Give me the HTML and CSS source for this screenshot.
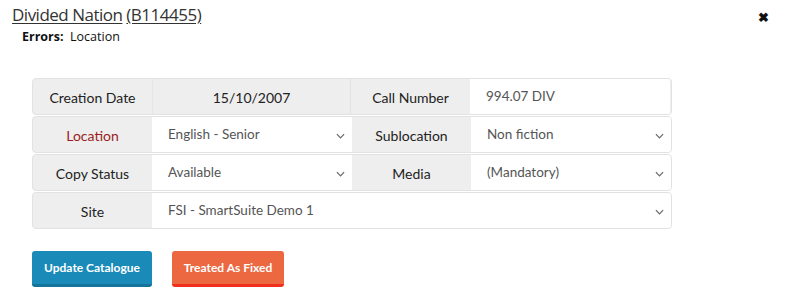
FILE: index.html
```html
<!DOCTYPE html>
<html>
<head>
<meta charset="utf-8">
<link rel="stylesheet" href="styles.css">
</head>
<body>
<div class="dialog">
  <div class="header">
    <div class="title"><a class="link">Divided Nation</a> <a class="link">(B114455)</a></div>
    <span class="close">&#10006;</span>
  </div>
  <div class="errors"><b>Errors:</b>&nbsp; Location</div>

  <div class="form">
    <div class="row">
      <div class="label">Creation Date</div>
      <div class="value static">15/10/2007</div>
      <div class="label">Call Number</div>
      <div class="value field">994.07 DIV</div>
    </div>
    <div class="row">
      <div class="label error">Location</div>
      <div class="value field select">English - Senior<svg class="chev" viewBox="0 0 10 6"><path d="M1 1l4 4 4-4"/></svg></div>
      <div class="label">Sublocation</div>
      <div class="value field select">Non fiction<svg class="chev" viewBox="0 0 10 6"><path d="M1 1l4 4 4-4"/></svg></div>
    </div>
    <div class="row">
      <div class="label">Copy Status</div>
      <div class="value field select">Available<svg class="chev" viewBox="0 0 10 6"><path d="M1 1l4 4 4-4"/></svg></div>
      <div class="label">Media</div>
      <div class="value field select">(Mandatory)<svg class="chev" viewBox="0 0 10 6"><path d="M1 1l4 4 4-4"/></svg></div>
    </div>
    <div class="row">
      <div class="label">Site</div>
      <div class="value field select wide">FSI - SmartSuite Demo 1<svg class="chev" viewBox="0 0 10 6"><path d="M1 1l4 4 4-4"/></svg></div>
    </div>
  </div>

  <div class="buttons">
    <button class="btn blue">Update Catalogue</button>
    <button class="btn orange">Treated As Fixed</button>
  </div>
</div>
</body>
</html>
```
FILE: styles.css
```css
* { box-sizing: border-box; }
html, body { margin: 0; padding: 0; background: #fff; }
body { font-family: Lato, "Open Sans", sans-serif; color: #222; }
.dialog { width: 786px; height: 308px; padding: 3px 0 0 12px; position: relative; }
.header { display: flex; justify-content: space-between; align-items: center; padding-right: 17px; }
.title { font-family: "Open Sans", sans-serif; font-size: 17px; color: #333; line-height: 24px; letter-spacing: -0.5px; }
.link { text-decoration: underline; text-underline-offset: 2px; text-decoration-thickness: 1px; }
.close { font-size: 13px; font-weight: bold; color: #111; margin-top: 4px; }
.errors { font-family: "Open Sans", sans-serif; font-size: 12.5px; padding-left: 10px; margin-top: 1px; color: #111; }
.errors b { font-weight: 700; }
.form { margin: 33px 0 0 20px; width: 640px; display: flex; flex-direction: column; gap: 1px; }
.row { display: flex; height: 37px; background: #eee; border: 1px solid #e2e2e2; border-radius: 4px; overflow: hidden; }
.label { width: 119px; flex: none; display: flex; align-items: center; justify-content: center; font-size: 14px; color: #222; padding-top: 2px; }
.label.error { color: #9b1c1c; }
.value { width: 200px; flex: none; display: flex; align-items: center; font-size: 14px; position: relative; }
.value.static { justify-content: center; color: #222; padding-top: 2px; width: 199px; border-left: 1px solid #e6e6e6; border-right: 1px solid #e2e2e2; }
.value.field { background: #fff; color: #555; padding: 0 16px 2px 16px; align-items: flex-start; padding-top: 9px; font-size: 13.5px; }
.value.wide { flex: 1; }
.chev { position: absolute; right: 7px; top: 16px; width: 9px; height: 6px; fill: none; stroke: #666; stroke-width: 1.3; }
.buttons { display: flex; gap: 20px; margin: 22px 0 0 20px; }
.btn { font-family: Lato, sans-serif; font-weight: 700; font-size: 12px; color: #fff; border: none; border-radius: 3px; height: 36px; padding: 0; white-space: nowrap; }
.btn.blue { background: #1a8bb9; border-bottom: 3px solid #13739a; width: 120px; }
.btn.orange { background: #ec6840; border-bottom: 3px solid #f0301d; width: 112px; }
```
